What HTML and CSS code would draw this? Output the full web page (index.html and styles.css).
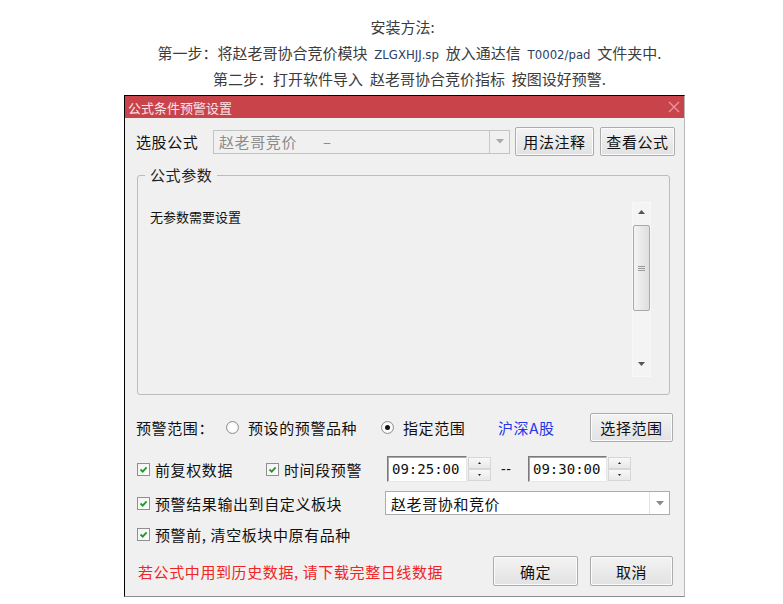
FILE: index.html
```html
<!DOCTYPE html>
<html lang="zh-CN">
<head>
  <meta charset="UTF-8">
  <meta name="viewport" content="width=device-width, initial-scale=1.0">
  <title>公式条件预警设置</title>
  <link rel="stylesheet" href="styles.css">
</head>
<body>
  <!-- Install notes -->
  <div class="intro">
    <p class="intro-head">安装方法:</p>
    <p>第一步：将赵老哥协合竞价模块 <span class="code">ZLGXHJJ.sp</span> 放入通达信 <span class="code">T0002/pad</span> 文件夹中.</p>
    <p>第二步：打开软件导入 赵老哥协合竞价指标 按图设好预警.</p>
  </div>

  <!-- Alert settings dialog -->
  <div class="dialog">
    <div class="titlebar">
      <span class="title">公式条件预警设置</span>
      <svg class="close" width="12" height="12" viewBox="0 0 12 12">
        <path d="M1 1 L11 11 M11 1 L1 11" stroke="#e8989c" stroke-width="1.3" fill="none"/>
      </svg>
    </div>

    <div class="dialog-body">
      <div class="row row-formula">
        <span class="formula-label">选股公式</span>
        <div class="combo combo-disabled">
          <span class="combo-text">赵老哥竞价<span class="combo-dash">–</span></span>
          <span class="combo-arrow">
            <svg width="8" height="5" viewBox="0 0 8 5"><path d="M0 0 H8 L4 4.5 Z" fill="#a8a8a8"/></svg>
          </span>
        </div>
        <button class="btn btn-note">用法注释</button>
        <button class="btn btn-view">查看公式</button>
      </div>

      <fieldset class="params">
        <legend>公式参数</legend>
        <div class="params-inner">
          <p class="params-empty">无参数需要设置</p>
          <div class="scrollbar">
            <div class="sb-up">
              <svg width="7" height="4" viewBox="0 0 7 4"><path d="M0 4 L3.5 0 L7 4 Z" fill="#555"/></svg>
            </div>
            <div class="sb-thumb">
              <svg width="7" height="7" viewBox="0 0 7 7"><path d="M0 1.5 H7 M0 3.5 H7 M0 5.5 H7" stroke="#9a9a9a" stroke-width="1"/></svg>
            </div>
            <div class="sb-down">
              <svg width="7" height="4" viewBox="0 0 7 4"><path d="M0 0 H7 L3.5 4 Z" fill="#555"/></svg>
            </div>
          </div>
        </div>
      </fieldset>

      <div class="row row-range">
        <span class="range-label">预警范围：</span>
        <label class="radio-item radio-preset"><span class="radio"></span>预设的预警品种</label>
        <label class="radio-item radio-custom"><span class="radio checked"></span>指定范围</label>
        <span class="market">沪深A股</span>
        <button class="btn btn-range">选择范围</button>
      </div>

      <div class="row row-time">
        <label class="check-item check-adjust">
          <span class="check"><svg width="11" height="11" viewBox="0 0 11 11"><path d="M2.5 5.5 L4.7 7.6 L8.6 3.3" stroke="#1f9a2a" stroke-width="1.8" fill="none"/></svg></span>前复权数据
        </label>
        <label class="check-item check-period">
          <span class="check"><svg width="11" height="11" viewBox="0 0 11 11"><path d="M2.5 5.5 L4.7 7.6 L8.6 3.3" stroke="#1f9a2a" stroke-width="1.8" fill="none"/></svg></span>时间段预警
        </label>
        <div class="timebox">09:25:00</div>
        <div class="spin">
          <span><svg width="3" height="2" viewBox="0 0 3 2"><path d="M0 2 L1.5 0 L3 2 Z" fill="#222"/></svg></span>
          <span><svg width="3" height="2" viewBox="0 0 3 2"><path d="M0 0 H3 L1.5 2 Z" fill="#222"/></svg></span>
        </div>
        <span class="time-sep">--</span>
        <div class="timebox timebox-end">09:30:00</div>
        <div class="spin">
          <span><svg width="3" height="2" viewBox="0 0 3 2"><path d="M0 2 L1.5 0 L3 2 Z" fill="#222"/></svg></span>
          <span><svg width="3" height="2" viewBox="0 0 3 2"><path d="M0 0 H3 L1.5 2 Z" fill="#222"/></svg></span>
        </div>
      </div>

      <div class="row row-block">
        <label class="check-item check-output">
          <span class="check"><svg width="11" height="11" viewBox="0 0 11 11"><path d="M2.5 5.5 L4.7 7.6 L8.6 3.3" stroke="#1f9a2a" stroke-width="1.8" fill="none"/></svg></span>预警结果输出到自定义板块
        </label>
        <div class="combo combo-block">
          <span class="combo-text">赵老哥协和竞价</span>
          <span class="combo-arrow">
            <svg width="8" height="5" viewBox="0 0 8 5"><path d="M0 0 H8 L4 4.5 Z" fill="#8a8a8a"/></svg>
          </span>
        </div>
      </div>

      <div class="row row-clear">
        <label class="check-item">
          <span class="check"><svg width="11" height="11" viewBox="0 0 11 11"><path d="M2.5 5.5 L4.7 7.6 L8.6 3.3" stroke="#1f9a2a" stroke-width="1.8" fill="none"/></svg></span>预警前, 清空板块中原有品种
        </label>
      </div>

      <div class="row row-footer">
        <span class="warn">若公式中用到历史数据, 请下载完整日线数据</span>
        <button class="btn btn-ok">确定</button>
        <button class="btn btn-cancel">取消</button>
      </div>
    </div>
  </div>
</body>
</html>
```

FILE: styles.css
```css
body {
  margin: 0;
  background-color: #fff;
  font-family: "Noto Sans CJK SC", sans-serif;
}

/* Install notes */
.intro {
  padding: 14px 0 0 36px;
  text-align: center;
  color: #3c3c3c;
  font-size: 15px;
  line-height: 26px;
}

.intro p {
  margin: 0;
  height: 26px;
  word-spacing: 3.5px;
}

.intro .intro-head {
  padding-right: 14px;
}

.intro .code {
  font-family: "DejaVu Sans", sans-serif;
  font-stretch: condensed;
  font-size: 13px;
  line-height: 1;
  color: #2c3d66;
  word-spacing: 0;
}

/* Dialog frame */
.dialog {
  width: 559px;
  margin: 3px 0 0 124px;
  border: 1px solid #000;
  border-right-color: #b8b8b8;
  border-bottom-color: #8c8c8c;
  background-color: #f0f0f0;
}

.titlebar {
  height: 22px;
  background-color: #c9434b;
  display: flex;
  align-items: center;
  justify-content: space-between;
  padding: 0 4px 0 3px;
}

.title {
  color: #fde3e5;
  font-size: 13px;
}

.dialog-body {
  padding: 9px 9px 10px 11px;
  font-size: 15px;
  letter-spacing: 0.6px;
  color: #111;
}

.row {
  display: flex;
  align-items: center;
}

/* Buttons */
.btn {
  font: inherit;
  letter-spacing: inherit;
  color: #111;
  padding: 0;
  border: 1px solid #acacac;
  border-radius: 2px;
  background: linear-gradient(#f3f3f3, #e2e2e2);
  box-shadow: inset 0 0 0 1px #fbfbfb;
}

/* Formula row */
.row-formula {
  height: 29px;
}

.formula-label {
  width: 77px;
}

.combo {
  display: flex;
  align-items: stretch;
  height: 24px;
  box-sizing: border-box;
  border: 1px solid #acacac;
  background-color: #fff;
}

.combo-text {
  flex: 1;
  display: flex;
  align-items: center;
  padding-left: 5px;
}

.combo-arrow {
  width: 19px;
  display: flex;
  align-items: center;
  justify-content: center;
  border-left: 1px solid #e2e2e2;
}

.combo-disabled {
  width: 297px;
  background-color: #f0f0f0;
  border-color: #c3c3c3;
  color: #8c8c8c;
}

.combo-disabled .combo-arrow {
  border-left-color: #c8c8c8;
}

.combo-dash {
  margin-left: 26px;
}

.btn-note {
  width: 79px;
  height: 29px;
  margin-left: 5px;
}

.btn-view {
  width: 75px;
  height: 29px;
  margin-left: 6px;
}

/* Parameters group */
.params {
  margin: 9px 5px 0 1px;
  padding: 17px 18px 17px 12px;
  border: 1px solid #bcbcbc;
  border-radius: 3px;
  min-inline-size: 0;
}

.params legend {
  margin-left: -5px;
  padding: 0 5px;
  line-height: 20px;
  color: #222;
}

.params-inner {
  display: flex;
  height: 175px;
}

.params-empty {
  flex: 1;
  margin: 6px 0 0;
  font-size: 13px;
  line-height: 18px;
  letter-spacing: 0;
}

.scrollbar {
  width: 19px;
  display: flex;
  flex-direction: column;
  align-items: center;
  background-color: #f4f4f4;
  box-shadow: inset 0 0 0 1px #f8f8f8;
}

.sb-up {
  height: 20px;
  display: flex;
  align-items: center;
  justify-content: center;
}

.sb-thumb {
  width: 17px;
  height: 86px;
  margin-top: 3px;
  box-sizing: border-box;
  border: 1px solid #a9a9a9;
  border-radius: 2px;
  background: linear-gradient(to right, #f4f4f4, #dedede);
  display: flex;
  align-items: center;
  justify-content: center;
}

.sb-down {
  margin-top: auto;
  height: 26px;
  display: flex;
  align-items: center;
  justify-content: center;
}

/* Range row */
.row-range {
  margin-top: 18px;
  height: 29px;
}

.range-label {
  width: 90px;
}

.radio-item {
  display: flex;
  align-items: center;
  gap: 9px;
}

.radio-preset {
  width: 155px;
}

.radio-custom {
  width: 117px;
}

.radio {
  width: 13px;
  height: 13px;
  box-sizing: border-box;
  border: 1px solid #8f8f8f;
  border-radius: 50%;
  background: radial-gradient(circle, #fff 40%, #e4e4e4);
  display: flex;
  align-items: center;
  justify-content: center;
}

.radio.checked::after {
  content: "";
  width: 5px;
  height: 5px;
  border-radius: 50%;
  background-color: #111;
}

.market {
  color: #2336e8;
}

.btn-range {
  width: 83px;
  height: 29px;
  margin-left: auto;
  margin-right: 2px;
}

/* Checkboxes */
.check-item {
  display: flex;
  align-items: center;
  gap: 5px;
  margin-left: 1px;
}

.check {
  width: 13px;
  height: 13px;
  box-sizing: border-box;
  border: 1px solid #8f8f8f;
  background: linear-gradient(135deg, #f2f2f2, #fff);
  display: flex;
  align-items: center;
  justify-content: center;
}

/* Time row */
.row-time {
  margin-top: 14px;
  height: 26px;
}

.check-adjust {
  width: 128px;
}

.check-period {
  width: 121px;
}

.timebox {
  width: 80px;
  height: 26px;
  box-sizing: border-box;
  border: 1px solid;
  border-color: #7a7a7a #e6e6e6 #e6e6e6 #7a7a7a;
  box-shadow: inset 1px 1px 0 #a8a8a8;
  background-color: #fff;
  font-family: "DejaVu Sans Mono", monospace;
  font-size: 14px;
  letter-spacing: 0;
  line-height: 24px;
  padding-left: 4px;
}

.timebox-end {
  width: 79px;
}

.spin {
  width: 23px;
  height: 24px;
  margin-left: 1px;
  display: flex;
  flex-direction: column;
}

.spin span {
  flex: 1;
  border: 1px solid #d6d6d6;
  background: linear-gradient(#f8f8f8, #e8e8e8);
  display: flex;
  align-items: center;
  justify-content: center;
}

.time-sep {
  width: 11px;
  margin: 0 16px 0 10px;
  font-family: "Liberation Sans", sans-serif;
  font-size: 14px;
  letter-spacing: 0.5px;
}

/* Block row */
.row-block {
  margin-top: 9px;
  height: 24px;
}

.check-output {
  width: 248px;
}

.combo-block {
  width: 285px;
}

.row-clear {
  margin-top: 9px;
  height: 20px;
}

/* Footer */
.row-footer {
  margin-top: 12px;
  height: 30px;
}

.warn {
  margin-left: 2px;
  color: #f02424;
}

.btn-ok {
  width: 85px;
  height: 30px;
  margin-left: auto;
}

.btn-cancel {
  width: 83px;
  height: 30px;
  margin-left: 12px;
  margin-right: 2px;
}
```
